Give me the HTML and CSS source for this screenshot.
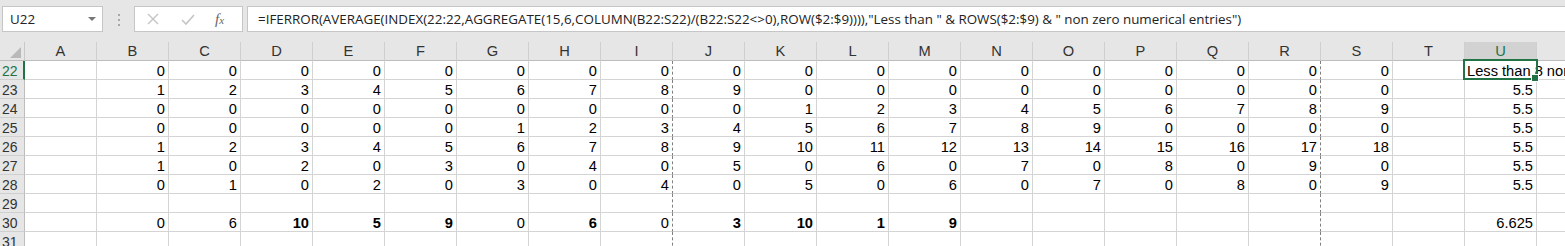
FILE: index.html
```html
<!DOCTYPE html>
<html lang="en">
<head>
  <meta charset="UTF-8" />
  <title>Sheet</title>
  <link rel="stylesheet" href="styles.css">
</head>
<body>
  <div class="toolbar">
    <div class="namebox">
      <span>U22</span>
      <span class="caret"></span>
    </div>
    <div class="grip"><i></i><i></i><i></i></div>
    <div class="fnbox">
      <svg class="ico" width="12" height="12" viewBox="0 0 12 12">
        <path d="M1 1 L11 11 M11 1 L1 11" stroke="#c4c4c4" stroke-width="1.4" fill="none"/>
      </svg>
      <svg class="ico" width="14" height="11" viewBox="0 0 14 11">
        <path d="M1 6 L5 10 L13 1" stroke="#c4c4c4" stroke-width="1.6" fill="none"/>
      </svg>
      <span class="fx">f<sub>x</sub></span>
    </div>
    <div class="formula">=IFERROR(AVERAGE(INDEX(22:22,AGGREGATE(15,6,COLUMN(B22:S22)/(B22:S22&lt;&gt;0),ROW($2:$9)))),"Less than " &amp; ROWS($2:$9) &amp; " non zero numerical entries")</div>
  </div>

  <div class="sheet"></div>

  <script>
    const sheet = document.querySelector(".sheet");
    const cols = "ABCDEFGHIJKLMNOPQRSTUV".split("");

    const data = {
      22: [0,0,0,0,0,0,0,0,0,0,0,0,0,0,0,0,0,0],
      23: [1,2,3,4,5,6,7,8,9,0,0,0,0,0,0,0,0,0],
      24: [0,0,0,0,0,0,0,0,0,1,2,3,4,5,6,7,8,9],
      25: [0,0,0,0,0,1,2,3,4,5,6,7,8,9,0,0,0,0],
      26: [1,2,3,4,5,6,7,8,9,10,11,12,13,14,15,16,17,18],
      27: [1,0,2,0,3,0,4,0,5,0,6,0,7,0,8,0,9,0],
      28: [0,1,0,2,0,3,0,4,0,5,0,6,0,7,0,8,0,9],
      29: [],
      30: [0,6,10,5,9,0,6,0,3,10,1,9],
      31: []
    };
    const colU = { 22: "Less than 8 non zero numerical entries", 23: "5.5", 24: "5.5", 25: "5.5", 26: "5.5", 27: "5.5", 28: "5.5", 30: "6.625" };
    const bold30 = ["D", "E", "F", "H", "J", "K", "L", "M"];

    function add(cls, text) {
      const d = document.createElement("div");
      d.className = cls;
      if (text !== undefined) d.textContent = text;
      sheet.appendChild(d);
      return d;
    }

    // header row
    add("corner");
    cols.forEach(c => add(c === "U" ? "ch on" : "ch", c === "V" ? "" : c));

    for (let r = 22; r <= 31; r++) {
      add(r === 22 ? "rh on" : "rh", r);
      cols.forEach((c, i) => {
        let cls = "c";
        if (c === "I" || c === "R") cls += " pb";
        let text = "";
        if (i >= 1 && i <= 18 && data[r][i - 1] !== undefined) text = data[r][i - 1];
        if (c === "U" && colU[r]) text = colU[r];
        if (r === 30 && bold30.includes(c)) cls += " b";
        if (c === "U" && r === 22) cls += " txt sel";
        add(cls, text);
      });
    }
  </script>
</body>
</html>
```

FILE: styles.css
```css
* {
  box-sizing: border-box;
}

body {
  margin: 0;
  width: 1565px;
  height: 246px;
  overflow: hidden;
  background: #e6e6e6;
  font-family: "Liberation Sans", Arial, sans-serif;
}

/* formula bar */
.toolbar {
  height: 42px;
  display: flex;
  align-items: flex-start;
  padding: 6px 0 0 2px;
  font-family: "Open Sans", "Noto Sans", sans-serif;
  font-size: 13.38px;
  color: #222;
}

.namebox {
  width: 101px;
  height: 26px;
  background: #fff;
  border: 1px solid #c6c6c6;
  display: flex;
  align-items: center;
  justify-content: space-between;
  padding: 0 6px 0 7px;
}

.caret {
  width: 0;
  height: 0;
  border-left: 4px solid transparent;
  border-right: 4px solid transparent;
  border-top: 4px solid #777;
}

.grip {
  width: 31px;
  display: flex;
  flex-direction: column;
  align-items: center;
  gap: 3px;
  padding-top: 8px;
}

.grip i {
  width: 2px;
  height: 2px;
  background: #a8a8a8;
}

.fnbox {
  width: 109px;
  height: 26px;
  background: #fff;
  border: 1px solid #c6c6c6;
  display: flex;
  align-items: center;
  padding-left: 12px;
  gap: 22px;
}

.fx {
  font-family: "Liberation Serif", serif;
  font-style: italic;
  font-size: 15px;
  color: #666;
  margin-left: -2px;
}

.fx sub {
  font-size: 11px;
  vertical-align: 0;
}

.formula {
  flex: 1;
  height: 26px;
  margin: 0 -10px 0 4px;
  background: #fff;
  border: 1px solid #c6c6c6;
  padding: 3px 0 0 10px;
  white-space: nowrap;
  overflow: hidden;
}

/* grid */
.sheet {
  display: grid;
  grid-template-columns: 25px repeat(22, 72px);
  grid-auto-rows: 19px;
  width: 1609px;
  background: #fff;
}

.corner {
  background: #e6e6e6;
  border-right: 1px solid #c8c8c8;
  border-bottom: 1px solid #bdbdbd;
  position: relative;
}

.corner::after {
  content: "";
  position: absolute;
  left: 10px;
  top: 5px;
  width: 11px;
  height: 11px;
  background: #b9b9b9;
  clip-path: polygon(100% 0, 100% 100%, 0 100%);
}

.ch {
  background: #e6e6e6;
  border-right: 1px solid #cfcfcf;
  border-bottom: 1px solid #bdbdbd;
  text-align: center;
  line-height: 18px;
  font-size: 14.67px;
  color: #333;
}

.ch.on {
  background: #d2d2d2;
  color: #217346;
  border-bottom-color: #217346;
}

.rh {
  background: #e6e6e6;
  border-right: 1px solid #bdbdbd;
  border-bottom: 1px solid #cfcfcf;
  padding: 1px 0 0 2px;
  line-height: 18px;
  font-size: 14px;
  color: #333;
}

.rh.on {
  color: #217346;
  border-right: 2px solid #217346;
}

.c {
  border-right: 1px solid #d4d4d4;
  border-bottom: 1px solid #d4d4d4;
  padding: 1px 3px 0 2px;
  line-height: 18px;
  font-size: 14.67px;
  text-align: right;
  white-space: nowrap;
  color: #000;
}

.c.pb {
  border-right: 1px dashed #7f7f7f;
}

.c.b {
  font-weight: bold;
}

.c.txt {
  text-align: left;
}

.c.sel {
  position: relative;
}

.c.sel::after {
  content: "";
  position: absolute;
  left: -2px;
  right: -2px;
  top: -2px;
  bottom: -1px;
  border: 2px solid #217346;
}

.c.sel::before {
  content: "";
  position: absolute;
  right: -3px;
  bottom: -3px;
  width: 6px;
  height: 6px;
  background: #217346;
  border: 1px solid #fff;
  z-index: 1;
}
```
